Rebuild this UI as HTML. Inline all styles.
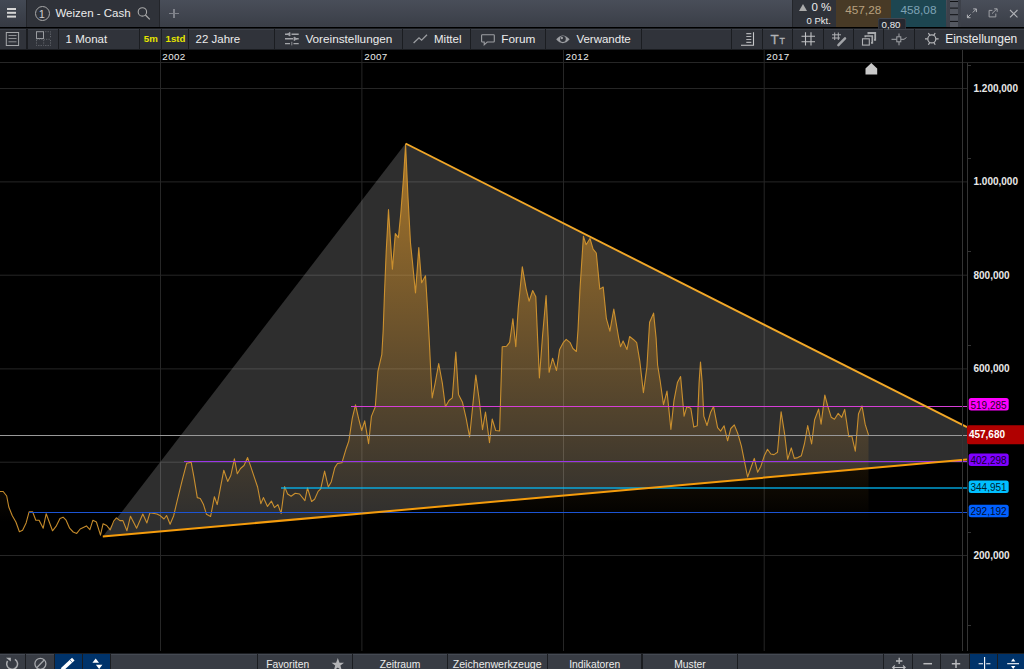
<!DOCTYPE html>
<html><head><meta charset="utf-8"><title>Weizen - Cash</title>
<style>
html,body{margin:0;padding:0;background:#000;}
body{width:1024px;height:669px;overflow:hidden;position:relative;font-family:"Liberation Sans",Arial,sans-serif;color:#e6e6e6;}
.abs{position:absolute;}
#top{left:0;top:0;width:1024px;height:27px;background:linear-gradient(#494e59,#3a3e47);}
#bar2{left:0;top:27.5px;width:1024px;height:22.8px;background:#1b1d21;}
.b{position:absolute;top:1px;height:20px;background:#30333a;box-shadow:inset 0 1px 0 #3d4149;}
.t{position:absolute;white-space:nowrap;font-size:11.5px;line-height:14px;color:#ececec;}
#bot{left:0;top:653px;width:1024px;height:16px;background:#1b1d21;}
.bb{position:absolute;top:1px;height:16px;background:#383c44;box-shadow:inset 0 1px 0 #454a53;}
.bt{position:absolute;white-space:nowrap;font-size:10.3px;line-height:12px;color:#ececec;top:6px;text-align:center;}
svg{position:absolute;left:0;top:0;}
.ax{font:bold 10px "Liberation Sans",Arial,sans-serif;fill:#e8e8e8;}
.lb{font:10px "Liberation Sans",Arial,sans-serif;}
.dt{font:9.8px "Liberation Sans",Arial,sans-serif;fill:#ededed;letter-spacing:0.4px;}
</style></head><body>

<!-- CHART -->
<svg width="1024" height="669" viewBox="0 0 1024 669">
<defs>
<linearGradient id="ag" x1="0" y1="143.5" x2="0" y2="522" gradientUnits="userSpaceOnUse">
<stop offset="0" stop-color="#e69b28" stop-opacity="0.66"/>
<stop offset="1" stop-color="#e69b28" stop-opacity="0"/>
</linearGradient>
</defs>
<rect x="0" y="50" width="1024" height="603" fill="#000"/>
<!-- grid -->
<g stroke="#262626" stroke-width="1">
<line x1="0" y1="62.5" x2="1024" y2="62.5"/>
<line x1="0" y1="88.5" x2="967" y2="88.5"/>
<line x1="0" y1="181.9" x2="967" y2="181.9"/>
<line x1="0" y1="275.2" x2="967" y2="275.2"/>
<line x1="0" y1="368.9" x2="967" y2="368.9"/>
<line x1="0" y1="462.2" x2="967" y2="462.2"/>
<line x1="0" y1="555.5" x2="967" y2="555.5"/>
<line x1="160.5" y1="50" x2="160.5" y2="651"/>
<line x1="361.9" y1="50" x2="361.9" y2="651"/>
<line x1="563.5" y1="50" x2="563.5" y2="651"/>
<line x1="764.2" y1="50" x2="764.2" y2="651"/>
</g>
<!-- triangle -->
<polygon points="102.8,536.6 405.6,143.5 967,427.2 967,459.6" fill="#ffffff" fill-opacity="0.18"/>
<!-- area -->
<path d="M0.0,491.5 L3.2,491.5 L6.7,496.0 L8.8,507.0 L12.3,515.8 L15.9,522.0 L19.4,531.7 L22.6,530.3 L26.1,522.9 L29.1,511.8 L32.6,511.8 L35.8,520.2 L39.1,520.2 L43.2,528.2 L46.2,513.7 L52.5,530.8 L56.0,526.4 L60.0,518.5 L63.1,517.2 L66.1,520.2 L69.6,528.2 L73.2,532.0 L76.7,533.4 L80.2,529.0 L86.4,525.9 L89.9,529.6 L92.9,520.2 L96.4,522.0 L100.5,535.2 L103.1,523.7 L106.7,525.5 L110.2,529.9 L113.7,521.1 L116.4,517.9 L119.9,520.6 L122.9,520.6 L126.9,530.8 L130.5,516.2 L136.6,528.2 L142.8,514.0 L146.9,522.9 L149.9,512.8 L156.9,514.0 L160.4,515.8 L164.0,519.0 L166.6,515.5 L170.1,524.3 L173.6,516.0 L177.1,501.1 L182.3,479.9 L186.7,463.2 L191.2,462.3 L193.8,476.4 L197.3,497.6 L200.3,498.5 L203.5,504.6 L206.5,514.3 L210.6,516.4 L214.4,496.7 L217.2,504.6 L223.8,470.2 L227.7,481.4 L230.8,475.5 L234.4,458.8 L237.3,473.8 L240.5,468.5 L244.0,465.5 L247.6,457.6 L251.1,467.6 L254.6,478.2 L257.6,487.0 L260.8,503.7 L263.4,497.6 L267.5,506.4 L271.4,501.1 L274.4,507.6 L277.9,504.6 L281.1,513.4 L284.6,486.6 L287.6,494.0 L291.1,496.3 L295.2,493.2 L299.6,494.0 L304.9,500.6 L307.5,487.9 L311.6,501.5 L314.6,499.3 L318.1,491.4 L320.7,488.8 L324.6,471.1 L328.3,487.0 L331.3,481.7 L334.8,467.6 L337.5,463.5 L341.9,462.8 L346.3,448.2 L348.8,441.1 L352.3,418.2 L355.5,404.9 L358.5,418.2 L361.7,430.5 L364.7,420.8 L368.6,443.7 L371.4,416.4 L375.3,406.7 L377.9,371.4 L381.8,354.7 L383.2,330.0 L384.4,295.5 L386.2,251.4 L388.5,209.6 L390.6,243.0 L392.4,269.1 L395.3,233.6 L398.4,237.6 L400.8,213.2 L403.5,177.9 L405.6,144.4 L407.9,195.5 L410.5,243.0 L412.3,260.3 L415.5,292.9 L418.8,247.6 L421.6,282.8 L425.5,275.8 L427.6,309.6 L429.4,343.0 L430.8,372.3 L432.2,397.9 L435.2,382.9 L438.7,363.5 L442.3,382.9 L445.4,406.7 L449.0,400.5 L452.3,397.9 L455.8,352.0 L458.5,394.4 L462.5,402.3 L466.1,418.2 L469.6,437.0 L473.1,402.3 L475.8,375.0 L479.3,400.5 L482.5,429.6 L485.5,412.0 L489.5,442.8 L492.2,419.0 L495.7,430.5 L499.6,431.0 L500.8,391.7 L502.2,346.7 L506.6,346.2 L509.6,342.3 L512.9,318.7 L515.8,346.7 L518.2,308.2 L522.3,266.7 L526.1,288.8 L529.1,301.1 L532.7,290.5 L535.8,296.7 L537.6,338.0 L539.4,378.0 L542.6,335.0 L546.1,295.5 L548.2,338.0 L549.1,372.3 L552.6,358.2 L556.5,370.5 L559.6,349.4 L563.2,342.7 L566.2,339.3 L570.2,342.7 L572.9,348.5 L576.4,351.5 L578.0,330.0 L579.9,290.5 L583.4,236.2 L586.1,244.7 L590.0,238.5 L593.1,249.1 L596.3,253.0 L599.8,289.1 L603.2,287.0 L606.4,318.7 L609.9,331.1 L613.8,309.0 L618.7,338.0 L620.5,346.7 L623.1,340.9 L627.0,349.4 L629.6,336.5 L633.7,339.7 L636.7,342.7 L639.9,361.7 L643.4,392.6 L646.9,367.0 L649.6,322.3 L653.6,313.1 L656.1,338.0 L657.6,365.0 L660.1,380.5 L663.5,404.7 L667.0,391.1 L670.9,429.4 L674.0,400.3 L677.4,382.6 L680.6,376.5 L684.1,416.1 L686.7,406.8 L690.8,408.2 L693.8,427.1 L697.3,425.8 L699.1,382.6 L700.5,362.0 L702.2,382.6 L703.8,416.1 L707.0,425.5 L710.5,412.6 L713.5,406.4 L717.6,427.6 L720.6,431.1 L724.1,425.8 L727.6,440.8 L730.8,428.5 L734.3,424.9 L737.9,433.8 L741.4,446.1 L744.4,461.1 L747.6,477.0 L751.1,467.3 L754.3,458.4 L757.6,472.2 L760.8,466.4 L764.3,455.8 L767.5,449.3 L770.8,454.0 L774.0,454.6 L777.5,452.3 L781.1,411.7 L784.6,433.8 L787.6,459.3 L791.3,447.9 L794.3,458.4 L797.8,457.6 L801.3,455.8 L804.5,443.5 L807.7,425.5 L811.6,444.0 L814.6,419.7 L818.6,409.1 L821.1,424.1 L824.8,395.0 L827.7,406.0 L831.2,417.2 L834.5,419.2 L838.2,413.4 L841.7,417.3 L844.7,409.4 L848.8,436.7 L851.8,435.8 L855.3,451.2 L858.5,413.8 L862.0,405.9 L865.2,424.4 L868.5,434.9 L868.5,651 L0,651 Z" fill="url(#ag)"/>
<path d="M0.0,491.5 L3.2,491.5 L6.7,496.0 L8.8,507.0 L12.3,515.8 L15.9,522.0 L19.4,531.7 L22.6,530.3 L26.1,522.9 L29.1,511.8 L32.6,511.8 L35.8,520.2 L39.1,520.2 L43.2,528.2 L46.2,513.7 L52.5,530.8 L56.0,526.4 L60.0,518.5 L63.1,517.2 L66.1,520.2 L69.6,528.2 L73.2,532.0 L76.7,533.4 L80.2,529.0 L86.4,525.9 L89.9,529.6 L92.9,520.2 L96.4,522.0 L100.5,535.2 L103.1,523.7 L106.7,525.5 L110.2,529.9 L113.7,521.1 L116.4,517.9 L119.9,520.6 L122.9,520.6 L126.9,530.8 L130.5,516.2 L136.6,528.2 L142.8,514.0 L146.9,522.9 L149.9,512.8 L156.9,514.0 L160.4,515.8 L164.0,519.0 L166.6,515.5 L170.1,524.3 L173.6,516.0 L177.1,501.1 L182.3,479.9 L186.7,463.2 L191.2,462.3 L193.8,476.4 L197.3,497.6 L200.3,498.5 L203.5,504.6 L206.5,514.3 L210.6,516.4 L214.4,496.7 L217.2,504.6 L223.8,470.2 L227.7,481.4 L230.8,475.5 L234.4,458.8 L237.3,473.8 L240.5,468.5 L244.0,465.5 L247.6,457.6 L251.1,467.6 L254.6,478.2 L257.6,487.0 L260.8,503.7 L263.4,497.6 L267.5,506.4 L271.4,501.1 L274.4,507.6 L277.9,504.6 L281.1,513.4 L284.6,486.6 L287.6,494.0 L291.1,496.3 L295.2,493.2 L299.6,494.0 L304.9,500.6 L307.5,487.9 L311.6,501.5 L314.6,499.3 L318.1,491.4 L320.7,488.8 L324.6,471.1 L328.3,487.0 L331.3,481.7 L334.8,467.6 L337.5,463.5 L341.9,462.8 L346.3,448.2 L348.8,441.1 L352.3,418.2 L355.5,404.9 L358.5,418.2 L361.7,430.5 L364.7,420.8 L368.6,443.7 L371.4,416.4 L375.3,406.7 L377.9,371.4 L381.8,354.7 L383.2,330.0 L384.4,295.5 L386.2,251.4 L388.5,209.6 L390.6,243.0 L392.4,269.1 L395.3,233.6 L398.4,237.6 L400.8,213.2 L403.5,177.9 L405.6,144.4 L407.9,195.5 L410.5,243.0 L412.3,260.3 L415.5,292.9 L418.8,247.6 L421.6,282.8 L425.5,275.8 L427.6,309.6 L429.4,343.0 L430.8,372.3 L432.2,397.9 L435.2,382.9 L438.7,363.5 L442.3,382.9 L445.4,406.7 L449.0,400.5 L452.3,397.9 L455.8,352.0 L458.5,394.4 L462.5,402.3 L466.1,418.2 L469.6,437.0 L473.1,402.3 L475.8,375.0 L479.3,400.5 L482.5,429.6 L485.5,412.0 L489.5,442.8 L492.2,419.0 L495.7,430.5 L499.6,431.0 L500.8,391.7 L502.2,346.7 L506.6,346.2 L509.6,342.3 L512.9,318.7 L515.8,346.7 L518.2,308.2 L522.3,266.7 L526.1,288.8 L529.1,301.1 L532.7,290.5 L535.8,296.7 L537.6,338.0 L539.4,378.0 L542.6,335.0 L546.1,295.5 L548.2,338.0 L549.1,372.3 L552.6,358.2 L556.5,370.5 L559.6,349.4 L563.2,342.7 L566.2,339.3 L570.2,342.7 L572.9,348.5 L576.4,351.5 L578.0,330.0 L579.9,290.5 L583.4,236.2 L586.1,244.7 L590.0,238.5 L593.1,249.1 L596.3,253.0 L599.8,289.1 L603.2,287.0 L606.4,318.7 L609.9,331.1 L613.8,309.0 L618.7,338.0 L620.5,346.7 L623.1,340.9 L627.0,349.4 L629.6,336.5 L633.7,339.7 L636.7,342.7 L639.9,361.7 L643.4,392.6 L646.9,367.0 L649.6,322.3 L653.6,313.1 L656.1,338.0 L657.6,365.0 L660.1,380.5 L663.5,404.7 L667.0,391.1 L670.9,429.4 L674.0,400.3 L677.4,382.6 L680.6,376.5 L684.1,416.1 L686.7,406.8 L690.8,408.2 L693.8,427.1 L697.3,425.8 L699.1,382.6 L700.5,362.0 L702.2,382.6 L703.8,416.1 L707.0,425.5 L710.5,412.6 L713.5,406.4 L717.6,427.6 L720.6,431.1 L724.1,425.8 L727.6,440.8 L730.8,428.5 L734.3,424.9 L737.9,433.8 L741.4,446.1 L744.4,461.1 L747.6,477.0 L751.1,467.3 L754.3,458.4 L757.6,472.2 L760.8,466.4 L764.3,455.8 L767.5,449.3 L770.8,454.0 L774.0,454.6 L777.5,452.3 L781.1,411.7 L784.6,433.8 L787.6,459.3 L791.3,447.9 L794.3,458.4 L797.8,457.6 L801.3,455.8 L804.5,443.5 L807.7,425.5 L811.6,444.0 L814.6,419.7 L818.6,409.1 L821.1,424.1 L824.8,395.0 L827.7,406.0 L831.2,417.2 L834.5,419.2 L838.2,413.4 L841.7,417.3 L844.7,409.4 L848.8,436.7 L851.8,435.8 L855.3,451.2 L858.5,413.8 L862.0,405.9 L865.2,424.4 L868.5,434.9" fill="none" stroke="#d6972f" stroke-opacity="0.92" stroke-width="1.1" stroke-linejoin="round"/>
<!-- h lines -->
<g shape-rendering="crispEdges">
<line x1="0" y1="435.5" x2="967" y2="435.5" stroke="#999999" stroke-width="1"/>
<line x1="351" y1="406.5" x2="967" y2="406.5" stroke="#d63fd6" stroke-width="1"/>
<line x1="184" y1="461.5" x2="967" y2="461.5" stroke="#9a35e8" stroke-width="1"/>
<line x1="29" y1="512.5" x2="967" y2="512.5" stroke="#1c54d4" stroke-width="1"/>
</g>
<line x1="280.5" y1="488" x2="967" y2="488" stroke="#00bfff" stroke-opacity="0.62" stroke-width="2" shape-rendering="crispEdges"/>
<!-- trendlines -->
<line x1="405.6" y1="143.5" x2="967" y2="427.2" stroke="#f2a828" stroke-width="1.9"/>
<line x1="102.8" y1="536.6" x2="967" y2="459.6" stroke="#f59c0c" stroke-width="2"/>
<!-- axis -->
<rect x="967" y="63" width="57" height="590" fill="#000"/>
<g stroke="#333" stroke-width="1" shape-rendering="crispEdges">
<line x1="962.5" y1="50" x2="962.5" y2="651"/>
<line x1="967.5" y1="63" x2="967.5" y2="651"/>
<line x1="968" y1="65.5" x2="971" y2="65.5"/>
<line x1="968" y1="158.5" x2="971" y2="158.5"/>
<line x1="968" y1="251.5" x2="971" y2="251.5"/>
<line x1="968" y1="345.5" x2="971" y2="345.5"/>
<line x1="968" y1="532.5" x2="971" y2="532.5"/>
<line x1="968" y1="625.5" x2="971" y2="625.5"/>
</g>
<polygon points="865.5,74.5 865.5,68.5 871.3,63 877.2,68.5 877.2,74.5" fill="#c9c9c9"/>
<g class="ax">
<text x="973.5" y="92">1.200,000</text>
<text x="973.5" y="185">1.000,000</text>
<text x="973.5" y="279">800,000</text>
<text x="973.5" y="372">600,000</text>
<text x="973.5" y="559">200,000</text>
</g>
<g class="dt">
<text x="162.3" y="59.6">2002</text>
<text x="364.3" y="59.6">2007</text>
<text x="565.6" y="59.6">2012</text>
<text x="766.3" y="59.6">2017</text>
</g>
<!-- labels -->
<rect x="968.7" y="398" width="40" height="12.5" rx="2.5" fill="#ff00ff"/>
<text class="lb" x="970.5" y="408.7" fill="#260026">519,285</text>
<rect x="968.7" y="453.5" width="40" height="12.5" rx="2.5" fill="#7f00ff"/>
<text class="lb" x="970.5" y="464.2" fill="#12002e">402,298</text>
<rect x="968.7" y="480.5" width="40" height="12.5" rx="2.5" fill="#00bfff"/>
<text class="lb" x="970.5" y="491.2" fill="#00222e">344,951</text>
<rect x="968.7" y="504.7" width="40" height="12.5" rx="2.5" fill="#0060ff"/>
<text class="lb" x="970.5" y="515.4" fill="#000e2e">292,192</text>
<rect x="967" y="425.2" width="58" height="19" rx="2" fill="#b00000"/>
<text x="968.9" y="437.9" style="font:bold 10px 'Liberation Sans',Arial,sans-serif" fill="#fff">457,680</text>
</svg>

<!-- TOP BAR -->
<div id="top" class="abs">
 <div class="abs" style="left:0;top:0;width:26px;height:27px;background:linear-gradient(#434954,#363a43);border-right:1px solid #23252a;"></div>
 <div class="abs" style="left:6.5px;top:8.4px;width:9.6px;height:1.7px;background:#d6d6d6;box-shadow:0 3.8px 0 #d6d6d6,0 7.6px 0 #d6d6d6;"></div>
 <div class="abs" style="left:27px;top:0;width:132px;height:27px;background:#2f3239;border-right:1px solid #23252a;"></div>
 <div class="abs" style="left:34.5px;top:5.6px;width:13.5px;height:13.5px;border:1px solid #a9a9a9;border-radius:50%;"></div>
 <div class="t" style="left:38.8px;top:6.5px;font-size:11px;color:#cfcfcf;">1</div>
 <div class="t" style="left:55.4px;top:6px;font-size:11.5px;">Weizen - Cash</div>
 <svg style="left:136px;top:5px" width="16" height="17" viewBox="0 0 16 17"><circle cx="6.4" cy="6.9" r="4.2" fill="none" stroke="#a9a9a9" stroke-width="1.1"/><line x1="9.4" y1="10" x2="13.8" y2="14.4" stroke="#a9a9a9" stroke-width="1.2"/></svg>
 <div class="abs" style="left:169.3px;top:12.5px;width:9.4px;height:1.5px;background:#7f828a;"></div>
 <div class="abs" style="left:173.3px;top:8.6px;width:1.5px;height:9.3px;background:#7f828a;"></div>

 <div class="abs" style="left:792px;top:0;width:43px;height:27px;background:#2f3239;border-left:1px solid #23252a;"></div>
 <div class="abs" style="left:799.2px;top:3.7px;width:0;height:0;border-left:4.1px solid transparent;border-right:4.1px solid transparent;border-bottom:7.3px solid #ababab;"></div>
 <div class="t" style="left:811.5px;top:0.1px;font-size:11.5px;">0 %</div>
 <div class="t" style="left:806.5px;top:14px;font-size:9.5px;">0 Pkt.</div>
 <div class="abs" style="left:835.5px;top:0;width:55px;height:27px;background:#483a26;"></div>
 <div class="t" style="left:845.2px;top:2.8px;font-size:11.8px;color:#b7a07f;">457,28</div>
 <div class="abs" style="left:891px;top:0;width:55px;height:27px;background:#1d4651;"></div>
 <div class="t" style="left:900.4px;top:2.8px;font-size:11.8px;color:#7fa3b5;">458,08</div>
 <div class="abs" style="left:947px;top:0;width:14px;height:27px;background:#3d414a;"></div>
 <div class="abs" style="left:949.7px;top:0;width:8.8px;height:27px;background:#545861;"></div>
 <div class="abs" style="left:949.7px;top:1.2px;width:8.8px;height:1.3px;background:#101114;box-shadow:0 6.6px 0 #101114,0 13.2px 0 #101114,0 19.9px 0 #101114;"></div>
 <svg style="left:964px;top:5px" width="58" height="17" viewBox="0 0 58 17">
  <g fill="none" stroke="#b0b2b7" stroke-width="1">
   <path d="M8.8 7.5 L12.3 4 M9.2 3.9 H12.4 V7.1 M6.6 9.4 L3.4 12.6 M3.4 9.6 V12.7 H6.5"/>
   <path d="M28.4 5.4 H25.1 V11.9 H31.8 V8.6 M28 8.6 L33 3.8 M30.2 3.8 H33.2 V6.8" stroke="#9fa1a6"/>
   <path d="M46 5 L53.5 12.4 M53.5 5 L46 12.4" stroke-width="1.1"/>
  </g>
 </svg>
</div>

<!-- SECOND BAR -->
<div id="bar2" class="abs">
 <div class="b" style="left:0;width:26px;"></div>
 <div class="b" style="left:27.5px;width:30px;"></div>
 <div class="b" style="left:59px;width:80px;"></div>
 <div class="b" style="left:140px;width:21px;"></div>
 <div class="b" style="left:162px;width:26px;"></div>
 <div class="b" style="left:189.3px;width:84.7px;"></div>
 <div class="b" style="left:275px;width:127px;"></div>
 <div class="b" style="left:403px;width:67px;"></div>
 <div class="b" style="left:471px;width:74px;"></div>
 <div class="b" style="left:546px;width:94.5px;"></div>
 <div class="b" style="left:641.5px;width:89.5px;"></div>
 <div class="b" style="left:732px;width:30px;"></div>
 <div class="b" style="left:763px;width:29px;"></div>
 <div class="b" style="left:793px;width:29.5px;"></div>
 <div class="b" style="left:823.5px;width:29.5px;"></div>
 <div class="b" style="left:854px;width:29px;"></div>
 <div class="b" style="left:884px;width:30px;"></div>
 <div class="b" style="left:915px;width:109px;"></div>

 <div class="t" style="left:65.6px;top:4.3px;">1 Monat</div>
 <div class="t" style="left:143.8px;top:4.1px;font-size:9.7px;font-weight:bold;color:#e6e600;">5m</div>
 <div class="t" style="left:165.6px;top:4.1px;font-size:9.7px;font-weight:bold;color:#e6e600;">1std</div>
 <div class="t" style="left:195.5px;top:4.3px;">22 Jahre</div>
 <div class="t" style="left:305.4px;top:4.3px;font-size:11.75px;">Voreinstellungen</div>
 <div class="t" style="left:434px;top:4.3px;">Mittel</div>
 <div class="t" style="left:501.3px;top:4.3px;font-size:11.8px;">Forum</div>
 <div class="t" style="left:576.4px;top:4.3px;">Verwandte</div>
 <div class="t" style="left:945.2px;top:4.3px;font-size:12px;">Einstellungen</div>

 <svg style="left:0;top:-0.3px" width="1024" height="23" viewBox="0 27 1024 23">
  <g fill="none" stroke="#b9babd" stroke-width="1">
   <!-- doc icon -->
   <rect x="6.3" y="32.5" width="12.3" height="13" stroke="#a6a8ab"/>
   <path d="M8.5 35.5 H16.5 M8.5 38.5 H16.5 M8.5 41.8 H16.5" stroke="#8d8f93"/>
   <!-- grid icon -->
   <rect x="36.5" y="31.7" width="7" height="6.8" stroke="#9a9ca0"/>
   <path d="M45.2 31.7 H50.5 V38 M36.5 40 V45.5 H43.5 M45.2 45.5 H50.5 V40 M43.7 40 V45.5 M36.5 39.3 H50.5" stroke="#63666c" stroke-dasharray="1.2 1.2"/>
   <!-- sliders -->
   <g stroke="#a3a5a9" stroke-width="1.4">
   <path d="M285 34.2 H288 M291.5 34.2 H298.7 M285 38.8 H293 M296 38.8 H298.7 M285 43.6 H290 M293.5 43.6 H298.7"/>
   </g>
   <path d="M287.3 34.2 L290 32.4 V36 Z M297 38.8 L294 37 V40.6 Z M291.8 41.8 V45.4" stroke="#a3a5a9" fill="#a3a5a9" stroke-width="0.8"/>
   <!-- zigzag -->
   <path d="M413.6 43 L419 37.8 L421.6 40.2 L427 34.8" stroke="#9c9ea2" stroke-width="1.3"/>
   <!-- speech -->
   <path d="M482.3 34.8 H493.6 Q494.3 34.8 494.3 35.5 V41.3 Q494.3 42 493.6 42 H487.2 L484.2 44.8 V42 H482.3 Q481.6 42 481.6 41.3 V35.5 Q481.6 34.8 482.3 34.8 Z" stroke="#9c9ea2" stroke-width="1.1"/>
   <!-- eye -->
   <path d="M556.2 39.3 Q562.8 31.5 569.6 39.3 Q562.8 47 556.2 39.3 Z" fill="#9c9ea2" stroke="none"/>
   <circle cx="562.9" cy="39" r="2.9" fill="#30333a" stroke="none"/>
   <circle cx="561.8" cy="38" r="1.2" fill="#9c9ea2" stroke="none"/>
   <!-- scale -->
   <path d="M753.5 32.2 V45.3 H741" stroke="#c6c7c9" stroke-width="1.1"/>
   <path d="M746.3 33.6 H751.3 M746.3 36.5 H751.3 M746.3 39.5 H751.3 M746.3 42.4 H751.3" stroke="#b0b1b4" stroke-width="1.1"/>
   <!-- hash -->
   <path d="M805.5 32.3 V45.6 M811 32.3 V45.6 M801.5 36.3 H815 M801.5 41.7 H815" stroke="#c0c1c4" stroke-width="1.1"/>
   <!-- hash + pen -->
   <path d="M834.7 32.5 V40 M838.3 32.5 V40 M832 34.8 H841 M832 38 H840" stroke="#b0b1b4" stroke-width="1"/>
   <path d="M838.4 45.2 L845 38.4" stroke="#a2a4a8" stroke-width="2.5" stroke-linecap="round"/>
   <!-- layers -->
   <rect x="862.5" y="38.8" width="6.8" height="6.3" stroke="#b0b1b4" stroke-width="1.1"/>
   <path d="M865.3 37.2 V36 H872.3 V42.8 H871" stroke="#a8aaad" stroke-width="1.7"/>
   <path d="M868.4 34.2 V33 H875.2 V39.8 H874" stroke="#a8aaad" stroke-width="1.8"/>
   <!-- crosshair-ish -->
   <path d="M891.5 39.3 H896.5 M901 39.3 H904 L906.5 37.5 M899 33.5 V36.5 M899 42 V45.3" stroke="#a2a4a8" stroke-width="1"/>
   <rect x="896.8" y="36.8" width="4" height="5" stroke="#a2a4a8" stroke-width="1"/>
   <!-- gear -->
   <circle cx="931.8" cy="38.9" r="4" stroke="#b4b5b8" stroke-width="1.2"/>
   <path d="M925 38.9 H927.6 M936 38.9 H938.6 M928.4 33 L929.8 35.4 M933.8 42.4 L935.2 44.8 M935.2 33 L933.8 35.4 M929.8 42.4 L928.4 44.8" stroke="#b4b5b8" stroke-width="1.2"/>
  </g>
  <text x="770.6" y="44.2" style="font:13.4px 'Liberation Sans',sans-serif" fill="#b0b2b6" stroke="#b0b2b6" stroke-width="0.3">T</text>
  <text x="779.6" y="44.2" style="font:8.8px 'Liberation Sans',sans-serif" fill="#b0b2b6" stroke="#b0b2b6" stroke-width="0.3">T</text>
 </svg>
</div>

<div class="abs" style="left:877.6px;top:18.4px;width:28px;height:10.4px;background:#252830;box-shadow:inset 0 1px 0 #434852, inset 1px 0 0 #33373f, inset -1px 0 0 #33373f;border-radius:2px 2px 0 0;"></div>
<div class="t abs" style="left:881.6px;top:17.6px;font-size:9.7px;">0,80</div>

<!-- BOTTOM BAR -->
<div id="bot" class="abs">
 <div class="bb" style="left:0;width:24.5px;"></div>
 <div class="bb" style="left:26px;width:27.5px;"></div>
 <div class="bb" style="left:54.5px;width:27.5px;background:#00336a;box-shadow:none;"></div>
 <div class="bb" style="left:83px;width:27px;background:#00336a;box-shadow:none;"></div>
 <div class="bb" style="left:111px;width:146px;"></div>
 <div class="bb" style="left:258px;width:94.3px;"></div>
 <div class="bb" style="left:353.3px;width:93.5px;"></div>
 <div class="bb" style="left:447.8px;width:98.8px;"></div>
 <div class="bb" style="left:547.8px;width:93.7px;"></div>
 <div class="bb" style="left:642.8px;width:94.3px;"></div>
 <div class="bb" style="left:738.2px;width:144.6px;"></div>
 <div class="bb" style="left:884px;width:28.2px;"></div>
 <div class="bb" style="left:913.2px;width:27.2px;"></div>
 <div class="bb" style="left:941.4px;width:27.4px;"></div>
 <div class="bb" style="left:969.7px;width:27.4px;background:#00336a;box-shadow:none;"></div>
 <div class="bb" style="left:998.1px;width:26px;background:#00336a;box-shadow:none;"></div>

 <div class="bt" style="left:266.2px;">Favoriten</div>
 <div class="bt" style="left:353.3px;width:93.5px;">Zeitraum</div>
 <div class="bt" style="left:447.8px;width:98.8px;font-size:10.6px;top:5px;">Zeichenwerkzeuge</div>
 <div class="bt" style="left:547.8px;width:93.7px;">Indikatoren</div>
 <div class="bt" style="left:642.8px;width:94.3px;">Muster</div>

 <svg style="left:0;top:0" width="1024" height="16" viewBox="0 653 1024 16">
  <g fill="none" stroke="#b9babd" stroke-width="1.3">
   <path d="M14.9 659.3 A5.4 5.4 0 1 1 7.6 661" stroke="#a9abae" stroke-width="1.5"/>
   <path d="M6 657.8 H10.8 V661.6 Z" fill="#b4b6b9" stroke="none"/>
   <circle cx="40.4" cy="663.8" r="5.5" stroke="#a6a8ac"/>
   <path d="M36.7 667.7 L44.2 660" stroke="#a6a8ac"/>
  </g>
  <path d="M62 669.5 L73.3 659.2" stroke="#fff" stroke-width="3.7" fill="none"/>
  <path d="M69.7 659.6 L72.6 662.8" stroke="#2a5a8c" stroke-width="0.7" fill="none"/>
  <path d="M92.4 662.8 L95.7 658.4 L99 662.8 Z M95.9 664.7 H102.4 L99.15 669.1 Z" fill="#fff"/>
  <path d="M337.8 658 L339.5 662.7 L344 662.8 L340.4 665.6 L341.8 670.5 L337.8 667.6 L333.8 670.5 L335.2 665.6 L331.6 662.8 L336.1 662.7 Z" fill="#b3b4b7"/>
  <g stroke="#b9babd" stroke-width="1.3" fill="none">
   <path d="M899.2 657.8 V664 M896 661 H902.4"/>
   <path d="M892.6 667.5 H905.2 M894.8 665.5 L892.6 667.5 L894.8 669.5 M903 665.5 L905.2 667.5 L903 669.5" stroke-width="1.1"/>
   <path d="M923.4 663.7 H932" stroke-width="1.5"/>
   <path d="M951.8 663.7 H960.2 M956 659.5 V668" stroke-width="1.5"/>
  </g>
  <g stroke="#fff" stroke-width="1.1" fill="none">
   <path d="M984.6 657 V669 M978.6 663.7 H983 M986.2 663.7 H990.4"/>
   <path d="M1007.2 663.7 H1019"/>
  </g>
  <path d="M1011 661.5 L1013.2 658.6 L1015.4 661.5 Z M1011 666 H1015.4 L1013.2 669 Z" fill="#fff"/>
 </svg>
</div>
</body></html>
